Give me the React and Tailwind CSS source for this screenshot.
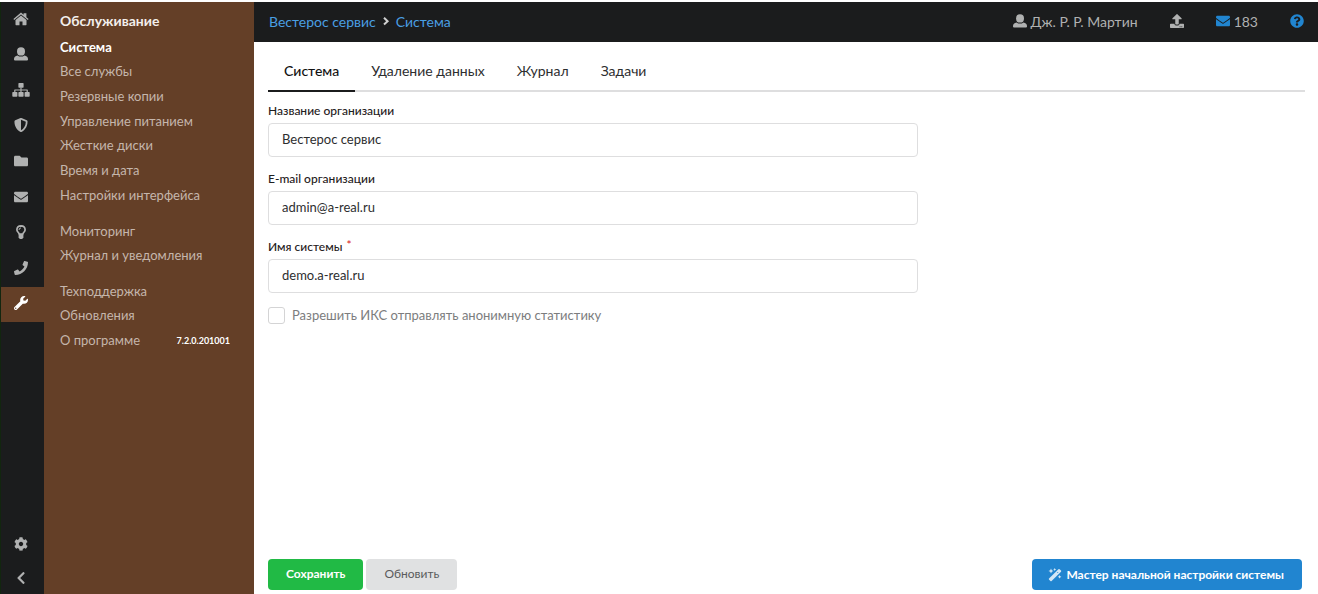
import { FaShieldAlt, FaFolder, FaEnvelope, FaPhone, FaWrench, FaCog, FaUpload, FaQuestionCircle, FaChevronLeft } from "react-icons/fa";

function HomeIcon() {
  return (
    <svg width="16" height="14" viewBox="0 0 16 14" fill="currentColor" aria-hidden="true">
      <path d="M8 0.6 L10.6 2.8 V1.2 H13.4 V5.2 L15.6 7.1 L14.8 8.1 L8 2.4 L1.2 8.1 L0.4 7.1 Z" />
      <path d="M8 3.5 L13.5 8.1 V12.6 Q13.5 13.2 12.9 13.2 H9.5 V9.4 H6.5 V13.2 H3.1 Q2.5 13.2 2.5 12.6 V8.1 Z" />
    </svg>
  );
}

function UserIcon() {
  return (
    <svg width="14" height="14" viewBox="0 0 14 14" fill="currentColor" aria-hidden="true">
      <ellipse cx="7" cy="4.4" rx="4" ry="4.2" />
      <path d="M3.6 8.4 Q5 9.6 7 9.6 Q9 9.6 10.4 8.4 Q14 9 14 12 V12.6 Q14 13.6 13 13.6 H1 Q0 13.6 0 12.6 V12 Q0 9 3.6 8.4 Z" />
    </svg>
  );
}

function SitemapIcon() {
  return (
    <svg width="18" height="14" viewBox="0 0 18 14" fill="currentColor" aria-hidden="true">
      <rect x="6.4" y="0" width="5.2" height="4.8" rx="0.7" />
      <path d="M8.4 4.5 H9.6 V6.4 H15.2 Q15.8 6.4 15.8 7 V9.3 H14.6 V7.6 H9.6 V9.3 H8.4 V7.6 H3.4 V9.3 H2.2 V7 Q2.2 6.4 2.8 6.4 H8.4 Z" />
      <rect x="0.3" y="9" width="5.1" height="4.8" rx="0.7" />
      <rect x="6.4" y="9" width="5.2" height="4.8" rx="0.7" />
      <rect x="12.6" y="9" width="5.1" height="4.8" rx="0.7" />
    </svg>
  );
}

function BulbIcon() {
  return (
    <svg width="12" height="14" viewBox="0 0 12 14" aria-hidden="true">
      <path d="M4.2 9.2 Q4 8.1 2.9 7 Q1.9 6 1.9 4.8 Q2 1 6 0.9 Q10 1 10.1 4.8 Q10.1 6 9.1 7 Q8 8.1 7.8 9.2 Z" fill="none" stroke="currentColor" strokeWidth="1.7" />
      <path d="M4 5 Q4 3 6 2.9" fill="none" stroke="currentColor" strokeWidth="1" />
      <path d="M3.6 10 H8.4 V12.4 L7.2 14 H4.8 L3.6 12.4 Z" fill="currentColor" />
    </svg>
  );
}

function WandIcon() {
  return (
    <svg width="14" height="14" viewBox="0 0 14 14" fill="currentColor" className="text-[#d3e7f6]" aria-hidden="true">
      <path d="M10.4 1.2 Q11 0.7 11.6 1.2 L13 2.6 Q13.5 3.2 13 3.8 L3.6 13 Q3 13.5 2.4 13 L1 11.6 Q0.5 11 1 10.4 Z" />
      <path d="M9.2 4 L10.2 5" stroke="#2185d0" strokeWidth="0.8" />
      <path d="M2.2 2.2 L3 0.5 L3.8 2.2 L5.5 3 L3.8 3.8 L3 5.5 L2.2 3.8 L0.5 3 Z" />
      <path d="M6.2 1 L6.7 0 L7.2 1 L8.2 1.5 L7.2 2 L6.7 3 L6.2 2 L5.2 1.5 Z" />
      <path d="M11 8.2 L11.6 7 L12.2 8.2 L13.4 8.8 L12.2 9.4 L11.6 10.6 L11 9.4 L9.8 8.8 Z" />
    </svg>
  );
}

const sections = [
  { icon: HomeIcon, label: "Главная" },
  { icon: UserIcon, label: "Пользователи" },
  { icon: SitemapIcon, label: "Сеть" },
  { icon: FaShieldAlt, label: "Защита" },
  { icon: FaFolder, label: "Файлы" },
  { icon: FaEnvelope, label: "Почта" },
  { icon: BulbIcon, label: "Подсказки" },
  { icon: FaPhone, label: "Телефония" },
  { icon: FaWrench, label: "Обслуживание", active: true },
];

const tabs = ["Система", "Удаление данных", "Журнал", "Задачи"];

function Rail() {
  return (
    <nav aria-label="Разделы" className="flex w-11 shrink-0 flex-col justify-between border-l border-[#12260f] bg-[#1b1c1d] text-[14px] text-[#b0b1b1]">
      <div className="flex h-[320px] flex-col">
        {sections.map(({ icon: Icon, label, active }) => (
          <a
            key={label}
            href="#"
            aria-label={label}
            className={active ? "flex flex-1 items-center justify-center bg-[#643f27] pr-1 pb-0.5 text-white" : "flex flex-1 items-center justify-center pr-1 pb-0.5"}
          >
            <Icon />
          </a>
        ))}
      </div>
      <div className="flex flex-col">
        <button type="button" aria-label="Настройки" className="flex h-9 items-center justify-center pr-1">
          <FaCog size={14} />
        </button>
        <button type="button" aria-label="Свернуть" className="flex h-8 items-center justify-center pr-1">
          <FaChevronLeft size={14} />
        </button>
      </div>
    </nav>
  );
}

function MenuLink({ children, active, note }) {
  return (
    <a href="#" className={active ? "flex flex-1 items-center justify-between font-bold text-white" : "flex flex-1 items-center justify-between text-[#c5b6ac]"}>
      <span>{children}</span>
      {note && <span className="text-[9px] font-bold text-white">{note}</span>}
    </a>
  );
}

function Menu() {
  return (
    <nav aria-label="Обслуживание" className="flex w-[210px] shrink-0 flex-col bg-[#643f27] pr-6 pl-4 text-[13px]">
      <h1 className="flex h-[33px] items-end pb-1 text-[14px] font-bold text-[#f3efec]">Обслуживание</h1>
      <div className="flex h-[173px] flex-col">
        <MenuLink active>Система</MenuLink>
        <MenuLink>Все службы</MenuLink>
        <MenuLink>Резервные копии</MenuLink>
        <MenuLink>Управление питанием</MenuLink>
        <MenuLink>Жесткие диски</MenuLink>
        <MenuLink>Время и дата</MenuLink>
        <MenuLink>Настройки интерфейса</MenuLink>
      </div>
      <div className="mt-[11px] flex h-[49px] flex-col">
        <MenuLink>Мониторинг</MenuLink>
        <MenuLink>Журнал и уведомления</MenuLink>
      </div>
      <div className="mt-[11px] flex h-[74px] flex-col">
        <MenuLink>Техподдержка</MenuLink>
        <MenuLink>Обновления</MenuLink>
        <MenuLink note="7.2.0.201001">О программе</MenuLink>
      </div>
    </nav>
  );
}

function Header() {
  return (
    <header className="flex h-10 items-center justify-between bg-[#1b1c1d] pr-[14px] pb-0.5 pl-[15px] text-[14px]">
      <nav aria-label="Путь" className="flex items-center gap-1.5 text-[#4a9fe3]">
        <a href="#">Вестерос сервис</a>
        <svg width="8" height="10" viewBox="0 0 8 10" className="text-[#d0d0d0]" aria-hidden="true">
          <path d="M2 1.8 L5.6 5.2 L2 8.6" fill="none" stroke="currentColor" strokeWidth="2" />
        </svg>
        <a href="#">Система</a>
      </nav>
      <div className="flex items-center gap-8 text-[#b0b1b1]">
        <a href="#" className="flex items-center gap-1">
          <UserIcon />
          Дж. Р. Р. Мартин
        </a>
        <button type="button" aria-label="Загрузить">
          <FaUpload size={14} />
        </button>
        <a href="#" className="flex items-center gap-1">
          <FaEnvelope size={14} className="text-[#2185d0]" />
          183
        </a>
        <button type="button" aria-label="Справка" className="text-[#2185d0]">
          <FaQuestionCircle size={14} />
        </button>
      </div>
    </header>
  );
}

function Field({ id, label, value, type = "text", required }) {
  return (
    <div className="flex flex-col">
      <label htmlFor={id} className="flex h-[18px] items-center text-[12px] font-medium text-[#1f2021]">
        {label}
        {required && <span className="mb-1 ml-1 text-[#db2828]">*</span>}
      </label>
      <input
        id={id}
        type={type}
        defaultValue={value}
        className="mt-[3px] h-[34px] w-full rounded border border-[#dededf] bg-white px-[13px] pb-0.5 text-[13px] text-[#2d2e2f] outline-none"
      />
    </div>
  );
}

export default function App() {
  return (
    <div className="flex min-h-screen bg-white pt-0.5 font-['Lato','Noto_Sans',sans-serif]">
      <Rail />
      <Menu />
      <div className="flex min-w-0 flex-1 flex-col">
        <Header />
        <main className="flex flex-1 flex-col pr-[13px] pb-1 pl-[14px]">
          <div role="tablist" className="flex h-[50px] border-b-2 border-[#dededf] text-[14px]">
            {tabs.map((tab, i) => (
              <button
                key={tab}
                type="button"
                role="tab"
                aria-selected={i === 0}
                className={
                  i === 0
                    ? "-mb-0.5 border-b-2 border-[#1b1c1d] px-4 pt-2 font-medium text-[#111112]"
                    : "-mb-0.5 border-b-2 border-transparent px-4 pt-2 text-[#2d2e2f]"
                }
              >
                {tab}
              </button>
            ))}
          </div>
          <form className="flex flex-1 flex-col pt-[10px]">
            <div className="flex max-w-[650px] flex-col gap-[13px]">
              <Field id="org" label="Название организации" value="Вестерос сервис" />
              <Field id="mail" type="email" label="E-mail организации" value="admin@a-real.ru" />
              <Field id="host" label="Имя системы" value="demo.a-real.ru" required />
              <label className="flex items-center gap-[7px] text-[13px] text-[#7c7d7e]">
                <input type="checkbox" className="size-[17px] appearance-none rounded-[3px] border border-[#d4d4d5] bg-white" />
                Разрешить ИКС отправлять анонимную статистику
              </label>
            </div>
            <div className="mt-auto flex items-center gap-[3px] pr-[3px]">
              <button type="submit" className="h-[31px] rounded bg-[#21ba45] px-[18px] pb-0.5 text-[12px] font-bold text-white">
                Сохранить
              </button>
              <button type="button" className="h-[31px] rounded bg-[#e0e1e2] px-[18px] pb-0.5 text-[12px] text-[#5a5b5c]">
                Обновить
              </button>
              <button type="button" className="ml-auto flex h-[31px] items-center gap-1 rounded bg-[#2185d0] pr-[18px] pl-4 text-[12px] font-bold text-white">
                <WandIcon />
                Мастер начальной настройки системы
              </button>
            </div>
          </form>
        </main>
      </div>
    </div>
  );
}
